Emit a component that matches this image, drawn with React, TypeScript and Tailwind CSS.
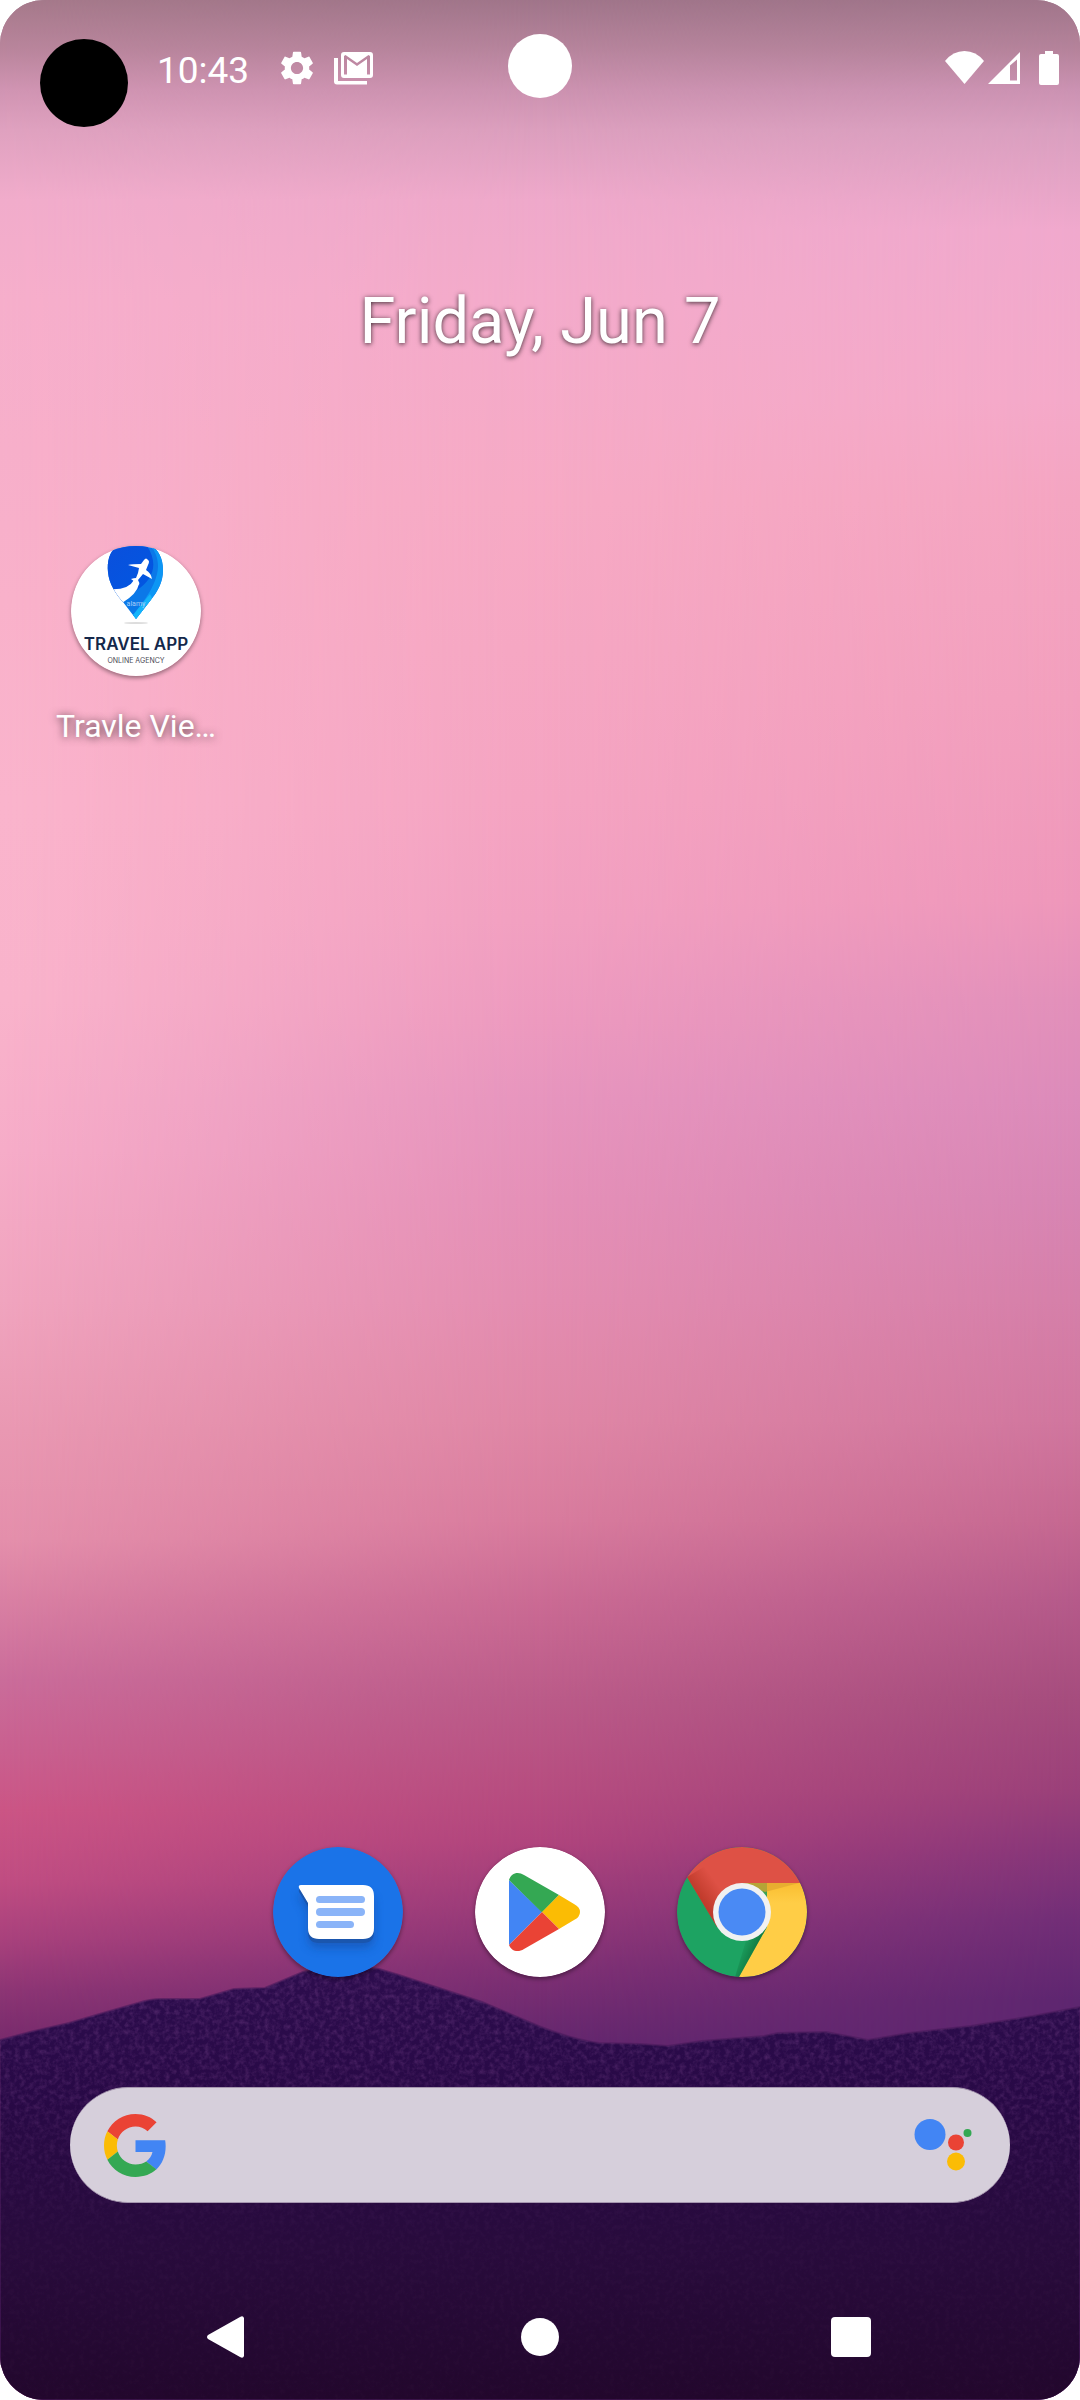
import React from "react";

const sky = {
  left: "bg-[linear-gradient(to_bottom,#a5798a_0px,#b9859c_50px,#d094b2_90px,#dfa1bf_130px,#f1accb_200px,#f6aecb_300px,#f7afca_450px,#f9b1ca_600px,#fab4cc_800px,#f9b3cb_1000px,#f6acc8_1150px,#f0a4be_1300px,#e998b2_1430px,#e48fab_1540px,#d980a3_1600px,#ca6c9a_1680px,#c9608f_1750px,#cb5585_1810px,#c04d82_1880px,#a8417c_1940px,#8d3574_1990px,#782b6c_2040px)]",
  center: "bg-[linear-gradient(to_bottom,#a0758a_0px,#b5839b_45px,#cc92b0_90px,#dc9fbe_130px,#efa9cb_200px,#f4abcb_300px,#f7aac5_500px,#f6a7c3_650px,#f5a4c2_800px,#f2a0c1_920px,#ed9abf_1020px,#e795be_1100px,#e590b8_1200px,#e48db1_1300px,#e087a6_1420px,#d97c9e_1520px,#cb6b94_1600px,#bb5b89_1700px,#b74d80_1790px,#b1457d_1840px,#983a79_1910px,#7f3074_1970px,#65276e_2040px)]",
  right: "bg-[linear-gradient(to_bottom,#a0758a_0px,#b5839b_50px,#cb92b2_90px,#d99fbf_130px,#f0a9cd_230px,#f4a9c9_400px,#f4a5c1_500px,#f29fbd_700px,#ee97ba_900px,#e290ba_1000px,#dc8bba_1100px,#d785b3_1200px,#d57fa9_1300px,#d0769e_1420px,#c56891_1520px,#b55a8a_1600px,#a54c7d_1700px,#9a4079_1790px,#873679_1850px,#712e77_1920px,#5e2670_2000px)]",
};

function Wallpaper() {
  return (
    <div aria-hidden="true" className="absolute inset-0 overflow-hidden">
      <div className={"absolute inset-0 " + sky.center} />
      <div className={"absolute inset-0 [mask-image:linear-gradient(to_right,black,transparent_50%)] " + sky.left} />
      <div className={"absolute inset-0 [mask-image:linear-gradient(to_right,transparent_50%,black)] " + sky.right} />
      <svg viewBox="0 0 1080 440" preserveAspectRatio="none" className="absolute inset-x-0 bottom-0 h-[440px] w-full">
        <defs>
          <linearGradient id="hill" x1="0" y1="0" x2="0" y2="1">
            <stop offset="0" stopColor="#2d0d4e" />
            <stop offset="0.3" stopColor="#280946" />
            <stop offset="0.65" stopColor="#280b3c" />
            <stop offset="1" stopColor="#22072c" />
          </linearGradient>
          <filter id="grain" x="0" y="0" width="100%" height="100%">
            <feTurbulence type="fractalNoise" baseFrequency="0.2" numOctaves="3" seed="4" />
            <feColorMatrix values="0 0 0 0 0.45  0 0 0 0 0.15  0 0 0 0 0.5  0.5 0 0 0 -0.2" />
            <feComposite in2="SourceGraphic" operator="in" />
          </filter>
          <linearGradient id="fade" x1="0" y1="0" x2="0" y2="1">
            <stop offset="0" stopColor="#fff" />
            <stop offset="0.3" stopColor="#fff" stopOpacity="0.8" />
            <stop offset="0.6" stopColor="#fff" stopOpacity="0.2" />
            <stop offset="1" stopColor="#fff" stopOpacity="0.1" />
          </linearGradient>
          <path
            id="ridge"
            d="M0 80 L30 72 L69 63 L103 53 L138 43 Q150 39 162 39 L200 39 L234 29 L265 28 L303 12 Q338 3 379 9 L399 15 L482 42 L541 67 Q575 80 599 83 L640 84 L668 86 L702 81 L764 76 L778 73 L826 72 L868 80 L909 73 L971 66 L1033 56 L1080 47 V440 H0 Z"
          />
        </defs>
        <use href="#ridge" fill="url(#hill)" stroke="#4a1a5c" strokeOpacity="0.6" strokeWidth="2" />
        <use href="#ridge" fill="url(#fade)" filter="url(#grain)" />
      </svg>
    </div>
  );
}

function StatusBar() {
  return (
    <header className="flex h-[136px] items-center pl-[157px] pr-[21px] text-white">
      <time className="pt-1 text-[37px] leading-none">10:43</time>
      <svg viewBox="2 2 20 20" className="ml-[31px] h-[34px] w-[34px]" fill="currentColor" aria-label="Settings">
        <path d="M19.14 12.94c.04-.3.06-.61.06-.94 0-.32-.02-.64-.07-.94l2.03-1.58c.18-.14.23-.41.12-.61l-1.92-3.32c-.12-.22-.37-.29-.59-.22l-2.39.96c-.5-.38-1.03-.7-1.62-.94l-.36-2.54c-.04-.24-.24-.41-.48-.41h-3.84c-.24 0-.43.17-.47.41l-.36 2.54c-.59.24-1.13.57-1.62.94l-2.39-.96c-.22-.08-.47 0-.59.22L2.74 8.87c-.12.21-.08.47.12.61l2.03 1.58c-.05.3-.09.63-.09.94s.02.64.07.94l-2.03 1.58c-.18.14-.23.41-.12.61l1.92 3.32c.12.22.37.29.59.22l2.39-.96c.5.38 1.03.7 1.62.94l.36 2.54c.05.24.24.41.48.41h3.84c.24 0 .44-.17.47-.41l.36-2.54c.59-.24 1.13-.56 1.62-.94l2.39.96c.22.08.47 0 .59-.22l1.92-3.32c.12-.22.07-.47-.12-.61l-2.01-1.58zM12 15.6c-1.98 0-3.6-1.62-3.6-3.6s1.62-3.6 3.6-3.6 3.6 1.62 3.6 3.6-1.62 3.6-3.6 3.6z" />
      </svg>
      <svg viewBox="0 0 39 34" className="ml-5 h-[34px] w-[39px]" fill="currentColor" aria-label="Mail">
        <path fillRule="evenodd" d="M10 1 H36 Q39 1 39 4 V24 Q39 27 36 27 H10 Q7 27 7 24 V4 Q7 1 10 1 Z M10 23.5 H13 V8 L23 15 L33 8 V23.5 H36 V5 L34.500 4 L23 12 L11.500 4 L10 5 Z" />
        <path d="M0 7 H4 V30 H33 V33.500 H3 Q0 33.500 0 30.500 Z" />
      </svg>
      <div className="ml-auto flex items-center">
        <svg viewBox="0 0 39 34" className="h-[34px] w-[39px]" fill="currentColor" aria-label="Wi-Fi">
          <path d="M0 10 Q8 0 19.500 0 Q31 0 39 10 L19.500 33 Z" />
        </svg>
        <svg viewBox="0 0 32 34" className="ml-1 h-[34px] w-8" fill="currentColor" aria-label="Signal">
          <path fillRule="evenodd" d="M0 33 L32 1 V33 Z M22 14.500 V29.500 H29 V8.500 Z" />
        </svg>
        <svg viewBox="0 0 20 34" className="ml-[19px] h-[34px] w-5" fill="currentColor" aria-label="Battery">
          <path d="M6 0 H14 V3 H18 Q20 3 20 5 V32 Q20 34 18 34 H2 Q0 34 0 32 V5 Q0 3 2 3 H6 Z" />
        </svg>
      </div>
    </header>
  );
}

const iconClass = "block h-[130px] w-[130px] rounded-full shadow-[0_2px_4px_rgba(0,0,0,0.4)]";

function TravelIcon() {
  return (
    <svg viewBox="0 0 130 130" className={iconClass} aria-hidden="true">
      <defs>
        <clipPath id="pin">
          <path d="M46 0 C38 6 36 16 37 26 C38 38 45 48 52 56 L65 73 L79 55 C87 45 92 36 92 24 C92 12 87 3 80 0 Z" />
        </clipPath>
        <linearGradient id="pinBlue" x1="0" y1="0" x2="1" y2="1">
          <stop offset="0" stopColor="#0b4fdc" />
          <stop offset="1" stopColor="#0058e2" />
        </linearGradient>
      </defs>
      <circle cx="65" cy="65" r="65" fill="#fff" />
      <g clipPath="url(#pin)">
        <rect x="35" width="60" height="75" fill="#0b78e8" />
        <path d="M80 0 C92 16 90 36 62 69 L66 75 L98 40 V0 Z" fill="#0d96f4" />
        <path d="M79 48 L62 69 L65 75 L82 54 Z" fill="#14b4fa" />
        <path d="M30 0 H76 C88 18 82 34 66 44 C60 48 56 52 52 56 L30 50 Z" fill="url(#pinBlue)" />
        <path d="M36 43 Q57 45 63 34 L68 38 Q66 48 51 57 L36 60 Z" fill="#fff" />
      </g>
      <path d="M77 14 Q79 15 77 19 L75 24 Q80 27 81 33 L72 28 L67 34 Q69 37 68 39 L64 36 L60 33 Q63 32 65 32 L67 27 L68 22 L57 19 Q61 18 70 18 L73 14 Q75 11 77 14 Z" fill="#fff" />
      <text x="65" y="60" textAnchor="middle" fill="#a9cff8" fontFamily="Roboto, sans-serif" fontSize="7">alamy</text>
      <ellipse cx="65" cy="77" rx="12" ry="1" fill="#ddd" />
      <text x="65" y="104" textAnchor="middle" fill="#14284b" fontFamily="Inter, sans-serif" fontWeight="600" fontSize="17">TRAVEL APP</text>
      <text x="65" y="117" textAnchor="middle" fill="#4a4a55" fontFamily="Inter, sans-serif" fontSize="7">ONLINE AGENCY</text>
    </svg>
  );
}

function MessagesIcon() {
  const bubble = "M28 38 H90 Q101 38 101 49 V81 Q101 92 90 92 H46 Q35 92 35 81 V56 L26 41 Q25 38 28 38 Z";
  return (
    <svg viewBox="0 0 130 130" className={iconClass} aria-hidden="true">
      <defs>
        <filter id="soft" x="-30%" y="-30%" width="160%" height="180%">
          <feGaussianBlur stdDeviation="5" />
        </filter>
      </defs>
      <circle cx="65" cy="65" r="65" fill="#1a73e8" />
      <path d={bubble} transform="translate(0 9)" fill="#174ea6" opacity="0.6" filter="url(#soft)" />
      <path d={bubble} transform="translate(0 4)" fill="#1a56ae" />
      <path d={bubble} fill="#fff" />
      <g fill="#8ab4f8">
        <rect x="43" y="49" width="49" height="7" rx="3.500" />
        <rect x="43" y="61" width="49" height="8" rx="4" />
        <rect x="43" y="74" width="38" height="7" rx="3.500" />
      </g>
    </svg>
  );
}

function PlayIcon() {
  return (
    <svg viewBox="0 0 130 130" className={iconClass} aria-hidden="true">
      <circle cx="65" cy="65" r="65" fill="#fff" />
      <path d="M34 33 L67 65 L34 98 Z" fill="#4285f4" />
      <path d="M34 33 C36 26 43 24 49 28 L84 48 L67 65.500 Z" fill="#34a853" />
      <path d="M84 48 L99 57 Q105 60 105 65 Q105 70 99 73 L84 82 L67 65 Z" fill="#fbbc04" />
      <path d="M34 98 C36 104 43 106 49 102 L84 82 L67 65 Z" fill="#ea4335" />
    </svg>
  );
}

function ChromeIcon() {
  return (
    <svg viewBox="0 0 130 130" className={iconClass} aria-hidden="true">
      <defs>
        <clipPath id="chromeDisc">
          <circle cx="65" cy="65" r="65" />
        </clipPath>
        <linearGradient id="redShade" gradientUnits="userSpaceOnUse" x1="22" y1="58" x2="44" y2="42">
          <stop offset="0" stopColor="#a52714" stopOpacity="0.65" />
          <stop offset="1" stopColor="#a52714" stopOpacity="0" />
        </linearGradient>
        <linearGradient id="greenShade" gradientUnits="userSpaceOnUse" x1="78" y1="104" x2="64" y2="98">
          <stop offset="0" stopColor="#055524" stopOpacity="0.5" />
          <stop offset="1" stopColor="#055524" stopOpacity="0" />
        </linearGradient>
        <linearGradient id="yellowShade" gradientUnits="userSpaceOnUse" x1="0" y1="36" x2="0" y2="56">
          <stop offset="0" stopColor="#ea9a00" stopOpacity="0.3" />
          <stop offset="1" stopColor="#ea9a00" stopOpacity="0" />
        </linearGradient>
      </defs>
      <g clipPath="url(#chromeDisc)">
        <rect width="130" height="130" fill="#1da362" />
        <path d="M62 130 L90 80 V36 H130 V130 Z" fill="#ffcd46" />
        <path d="M0 12 L10 30 L40 80 L65 36 H130 V0 H0 Z" fill="#de5145" />
        <path d="M10 30 L40 80 L65 36 L30 18 Z" fill="url(#redShade)" />
        <path d="M62 130 L90 80 L70 90 L58 130 Z" fill="url(#greenShade)" />
        <path d="M65 36 H130 V56 H85 Z" fill="url(#yellowShade)" />
        <path d="M65 36 H122 L88 45 Z" fill="#dfa52f" opacity="0.7" />
      </g>
      <circle cx="65" cy="65" r="29" fill="#f1f1f1" />
      <circle cx="65" cy="65" r="23.500" fill="#4a8af4" />
    </svg>
  );
}

function GoogleLogo() {
  return (
    <svg viewBox="0 0 48 48" className="h-[63px] w-[63px]" aria-hidden="true">
      <path fill="#ea4335" d="M24 9.5c3.54 0 6.71 1.22 9.21 3.6l6.85-6.85C35.9 2.38 30.47 0 24 0 14.62 0 6.51 5.38 2.56 13.22l7.98 6.19C12.43 13.72 17.74 9.5 24 9.5z" />
      <path fill="#4285f4" d="M46.98 24.55c0-1.57-.15-3.09-.38-4.55H24v9.02h12.94c-.58 2.96-2.26 5.48-4.78 7.18l7.73 6c4.51-4.18 7.09-10.36 7.09-17.65z" />
      <path fill="#fbbc05" d="M10.53 28.59c-.48-1.45-.76-2.99-.76-4.59s.27-3.14.76-4.59l-7.98-6.19C.92 16.46 0 20.12 0 24c0 3.88.92 7.54 2.56 10.78l7.97-6.19z" />
      <path fill="#34a853" d="M24 48c6.48 0 11.93-2.13 15.89-5.81l-7.73-6c-2.15 1.45-4.92 2.3-8.16 2.3-6.26 0-11.57-4.22-13.47-9.91l-7.98 6.19C6.51 42.62 14.62 48 24 48z" />
    </svg>
  );
}

function AssistantLogo() {
  return (
    <svg viewBox="0 0 58 56" className="h-14 w-[58px]" aria-hidden="true">
      <circle cx="16" cy="17.500" r="15.500" fill="#4285f4" />
      <circle cx="42" cy="25.500" r="8" fill="#ea4335" />
      <circle cx="53.500" cy="16" r="4" fill="#34a853" />
      <circle cx="42" cy="44.500" r="9" fill="#fbbc05" />
    </svg>
  );
}

export default function App() {
  return (
    <div className="min-h-screen bg-white">
      <div className="relative flex min-h-screen flex-col overflow-hidden rounded-[44px] font-['Roboto',sans-serif]">
        <Wallpaper />
        <div className="absolute left-10 top-[39px] h-[88px] w-[88px] rounded-full bg-black" />
        <div className="absolute left-1/2 top-[34px] h-16 w-16 -translate-x-1/2 rounded-full bg-white" />

        <div className="relative flex grow flex-col">
          <StatusBar />

          <main className="flex grow flex-col px-[35px]">
            <h1 className="mt-[149px] text-center text-[65px] leading-[72px] text-white [text-shadow:0_1px_5px_rgba(0,0,0,0.75)]">
              Friday, Jun 7
            </h1>

            <div className="mt-[189px] grid grid-cols-5">
              <button type="button" className="flex flex-col items-center gap-7">
                <TravelIcon />
                <span className="whitespace-nowrap text-[32px] leading-[44px] text-white [text-shadow:0_1px_8px_rgba(0,0,0,0.7)]">
                  Travle Vie…
                </span>
              </button>
            </div>

            <nav aria-label="Dock" className="mt-auto grid grid-cols-5">
              <button type="button" aria-label="Messages" className="col-start-2 flex justify-center">
                <MessagesIcon />
              </button>
              <button type="button" aria-label="Play Store" className="flex justify-center">
                <PlayIcon />
              </button>
              <button type="button" aria-label="Chrome" className="flex justify-center">
                <ChromeIcon />
              </button>
            </nav>

            <form
              role="search"
              className="mx-[35px] mb-[71px] mt-[110px] flex h-[116px] items-center rounded-full border-y border-[#a596ae] bg-[#d6cfdb] pl-[34px] pr-[38px]"
            >
              <button type="submit" aria-label="Google Search">
                <GoogleLogo />
              </button>
              <input type="text" aria-label="Search" className="h-full min-w-0 grow bg-transparent px-6 text-[37px] text-gray-800 outline-none" />
              <button type="button" aria-label="Assistant">
                <AssistantLogo />
              </button>
            </form>
          </main>

          <nav aria-label="System" className="flex h-[126px] items-center justify-between pl-[205px] pr-[209px] text-white">
            <button type="button" aria-label="Back" className="w-11">
              <svg viewBox="0 0 40 42" className="h-[42px] w-10" fill="currentColor">
                <path d="M39 2 V40 Q38 43 35 41 L3 23 Q1 21 3 19 L35 1 Q38 -1 39 2 Z" />
              </svg>
            </button>
            <button type="button" aria-label="Home" className="h-[38px] w-[38px] rounded-full bg-white" />
            <button type="button" aria-label="Recents" className="h-10 w-10 rounded bg-white" />
          </nav>
        </div>
      </div>
    </div>
  );
}
